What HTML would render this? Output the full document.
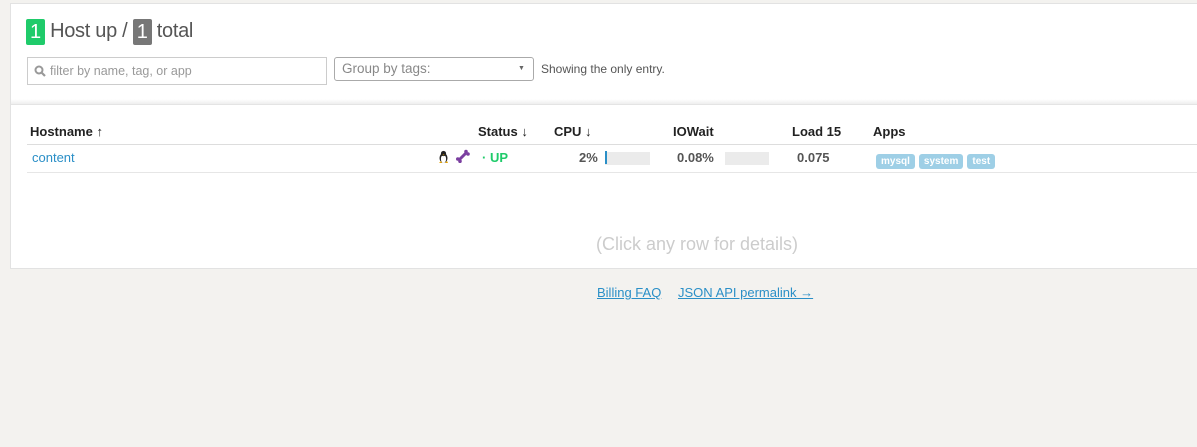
<!DOCTYPE html>
<html><head><style>
body{margin:0;width:1197px;height:447px;background:#f3f2ef;font-family:"Liberation Sans",sans-serif;position:relative;overflow:hidden}
.a{position:absolute;white-space:nowrap}
.card{position:absolute;left:10px;top:3px;width:1200px;height:264px;background:#fff;border:1px solid #e2e2e2}
.b{display:inline-block;color:#fff;font-size:20px;line-height:26px;padding:0 4px;border-radius:2px;vertical-align:middle}
.h{font-size:13px;font-weight:bold;color:#222;top:124px}
.c{font-size:13px;font-weight:bold;color:#555;top:150px}
.bar{position:absolute;height:13px;background:#ebebeb}
.tag{display:inline-block;background:#9ecfe6;color:#fff;font-size:10px;font-weight:bold;padding:2px 5px;border-radius:3px;margin-right:4px}
</style></head><body>
<div class="card"></div>
<div class="a" style="left:11px;top:99px;width:1190px;height:5px;background:linear-gradient(#fff,#eee);border-bottom:1px solid #e4e4e4"></div>
<div class="a" style="left:26px;top:18px;font-size:20px;color:#555;line-height:26px;letter-spacing:-0.3px"><span class="b" style="background:#1fcb6a">1</span> Host up / <span class="b" style="background:#777">1</span> total</div>
<div class="a" style="left:27px;top:57px;width:298px;height:26px;border:1px solid #ccc;background:#fff"></div>
<svg class="a" style="left:34px;top:65px" width="12" height="12" viewBox="0 0 12 12"><circle cx="5" cy="5" r="3.5" fill="none" stroke="#999" stroke-width="2"/><line x1="7.5" y1="7.5" x2="11" y2="11" stroke="#999" stroke-width="2.2"/></svg>
<div class="a" style="left:50px;top:64px;font-size:12.5px;color:#999">filter by name, tag, or app</div>
<div class="a" style="left:334px;top:57px;width:198px;height:22px;border:1px solid #aaa;border-radius:3px;background:#fff"></div>
<div class="a" style="left:342px;top:61px;font-size:13.5px;color:#888">Group by tags:</div>
<div class="a" style="left:518px;top:65px;font-size:7px;color:#666">&#9660;</div>
<div class="a" style="left:541px;top:62px;font-size:12px;color:#555">Showing the only entry.</div>
<div class="a h" style="left:30px">Hostname ↑</div>
<div class="a h" style="left:478px">Status ↓</div>
<div class="a h" style="left:554px">CPU ↓</div>
<div class="a h" style="left:673px">IOWait</div>
<div class="a h" style="left:792px">Load 15</div>
<div class="a h" style="left:873px">Apps</div>
<div class="a" style="left:27px;top:144px;width:1175px;height:1px;background:#ddd"></div>
<div class="a" style="left:27px;top:172px;width:1175px;height:1px;background:#e6e6e6"></div>
<div class="a" style="left:32px;top:150px;font-size:13px;color:#2a8fc7">content</div>
<svg class="a" style="left:438px;top:150px" width="11" height="14" viewBox="0 0 11 14"><ellipse cx="5.5" cy="8" rx="4" ry="5" fill="#222"/><ellipse cx="5.5" cy="9" rx="2.6" ry="4" fill="#fff"/><circle cx="5.5" cy="3.5" r="2.6" fill="#222"/><path d="M1 13h3l-1-2zM7 13h3l-1-2z" fill="#e8a400"/><path d="M4.5 4.5h2l-1 1z" fill="#e8a400"/></svg>
<svg class="a" style="left:456px;top:149px" width="14" height="14" viewBox="0 0 14 14"><path d="M3 11 L10 4" stroke="#7b3fa0" stroke-width="3"/><circle cx="10" cy="2.5" r="1.8" fill="#7b3fa0"/><circle cx="12" cy="5" r="1.8" fill="#7b3fa0"/><circle cx="1.8" cy="10" r="1.8" fill="#7b3fa0"/><circle cx="4" cy="12.2" r="1.8" fill="#7b3fa0"/></svg>
<div class="a c" style="left:482px;color:#1fcb6a">· UP</div>
<div class="a c" style="left:579px">2%</div>
<div class="bar" style="left:605px;top:152px;width:45px"></div>
<div class="a" style="left:605px;top:151px;width:2px;height:13px;background:#2a8fc7"></div>
<div class="a c" style="left:677px">0.08%</div>
<div class="bar" style="left:725px;top:152px;width:44px"></div>
<div class="a c" style="left:797px">0.075</div>
<div class="a" style="left:876px;top:151px"><span class="tag">mysql</span><span class="tag">system</span><span class="tag">test</span></div>
<div class="a" style="left:596px;top:234px;font-size:18px;color:#ccc">(Click any row for details)</div>
<div class="a" style="left:597px;top:285px;font-size:13px;color:#2a8fc7;text-decoration:underline">Billing FAQ</div>
<div class="a" style="left:678px;top:285px;font-size:13px;color:#2a8fc7;text-decoration:underline">JSON API permalink →</div>
</body></html>
